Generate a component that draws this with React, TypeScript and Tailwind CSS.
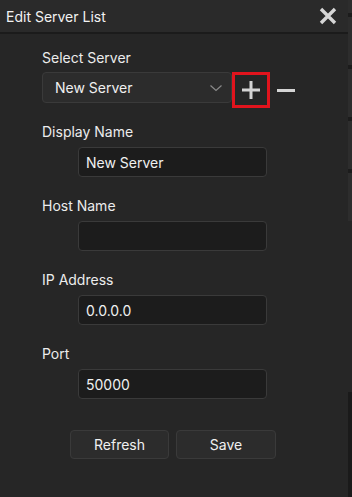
function Field({ label, value }: { label: string; value: string }) {
  return (
    <div className="flex flex-col">
      <div className="h-5 leading-5 text-[14px] text-[#ececec]">{label}</div>
      <div className="mt-[5px] ml-9 w-[189px] h-[30px] rounded-[4px] border border-[#3a3a3a] bg-[#1c1c1c] flex items-center px-[7px] text-[14px] text-[#f0f0f0]">
        {value}
      </div>
    </div>
  );
}

function App() {
  return (
    <div
      className="w-[352px] h-[497px] flex bg-[#262626] overflow-hidden"
      style={{ fontFamily: 'Inter, "Noto Sans", sans-serif' }}
    >
      {/* Dialog */}
      <div className="w-[348px] h-[495px] flex flex-col bg-[#262626]">
        <div className="h-8 shrink-0 flex items-center justify-between pl-[6px] pr-2 bg-[#2a2a2a]">
          <span className="text-[14px] text-[#f2f2f2]">Edit Server List</span>
          <svg width="20" height="20" viewBox="0 0 20 20" className="mr-[2px]">
            <path d="M3 3 L17 17 M17 3 L3 17" stroke="#d6d6d6" strokeWidth="3.4" strokeLinecap="butt" />
          </svg>
        </div>
        <div className="h-[2px] shrink-0 bg-[#1b1b1b]" />

        <div className="flex flex-col pl-[42px] pt-[14px]">
          <div className="h-5 leading-5 text-[14px] text-[#ececec]">Select Server</div>
          <div className="mt-1 flex items-start">
            <div className="w-[190px] h-[31px] rounded-[4px] border border-[#3a3a3a] bg-[#2c2c2c] flex items-center justify-between pl-3 pr-2 text-[14px] text-[#f0f0f0]">
              <span>New Server</span>
              <svg width="14" height="10" viewBox="0 0 14 10">
                <path d="M1.5 2.5 L7 7.5 L12.5 2.5" stroke="#8a8a8a" strokeWidth="1.2" fill="none" />
              </svg>
            </div>
            <div className="w-[38px] h-[36px] border-[3px] border-[#e1141d] flex items-center justify-center">
              <svg width="20" height="20" viewBox="0 0 20 20">
                <path d="M10 1 V19 M1 10 H19" stroke="#d4d4d4" strokeWidth="3" />
              </svg>
            </div>
            <div className="h-[36px] flex items-center ml-[7px]">
              <div className="w-[18px] h-[3px] bg-[#d4d4d4]" />
            </div>
          </div>

          <div className="mt-[14px] flex flex-col gap-[19px]">
            <Field label="Display Name" value="New Server" />
            <Field label="Host Name" value="" />
            <Field label="IP Address" value="0.0.0.0" />
            <Field label="Port" value="50000" />
          </div>

          <div className="mt-[31px] ml-7 flex gap-[7px]">
            <button className="w-[99px] h-[29px] rounded-[4px] border border-[#3a3a3a] bg-[#2c2c2c] text-[14px] text-[#f0f0f0]">
              Refresh
            </button>
            <button className="w-[100px] h-[29px] rounded-[4px] border border-[#3a3a3a] bg-[#2c2c2c] text-[14px] text-[#f0f0f0]">
              Save
            </button>
          </div>
        </div>
      </div>

      {/* Window behind the dialog */}
      <div className="w-1 flex flex-col">
        <div className="h-[13px] bg-[#2d2d2d]" />
        <div className="h-1 bg-[#1c1c1c]" />
        <div className="h-12 bg-[#2d2d2d]" />
        <div className="h-1 bg-[#1c1c1c]" />
        <div className="h-12 bg-[#2d2d2d]" />
        <div className="h-1 bg-[#1c1c1c]" />
        <div className="h-12 bg-[#2d2d2d]" />
        <div className="h-1 bg-[#1c1c1c]" />
        <div className="h-12 bg-[#2d2d2d]" />
        <div className="h-[171px] bg-[#262626]" />
        <div className="flex-1 bg-[#1a1a1a]" />
      </div>
    </div>
  );
}

export default App;
